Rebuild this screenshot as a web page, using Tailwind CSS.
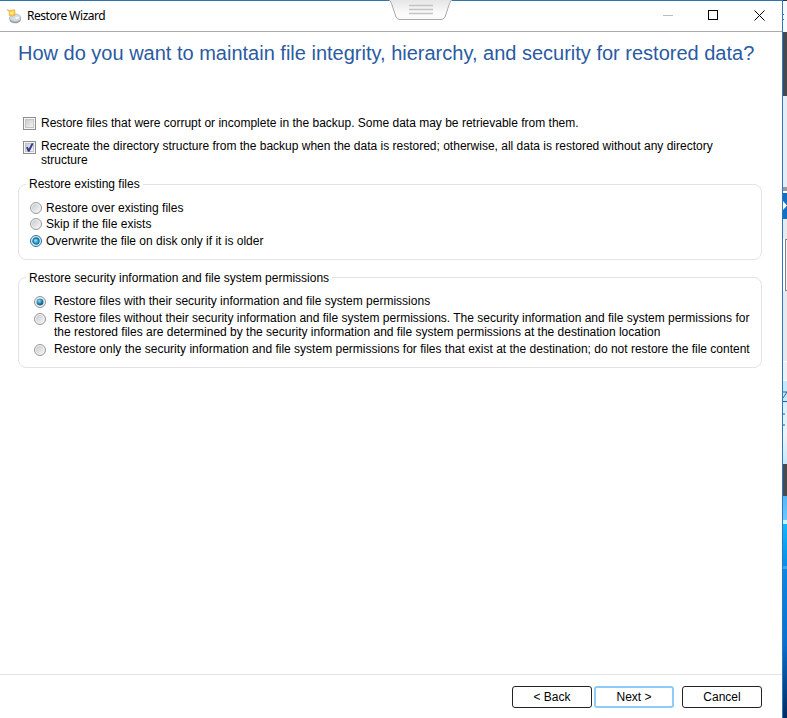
<!DOCTYPE html>
<html lang="en">
<head>
<meta charset="utf-8">
<title>Restore Wizard</title>
<script src="https://cdn.jsdelivr.net/npm/@tailwindcss/browser@4"></script>
</head>
<body class="w-[787px] h-[718px] overflow-hidden flex bg-white font-['Liberation_Sans',Arial,sans-serif] text-[12px] leading-[14px] text-black">
<svg class="absolute w-0 h-0">
  <defs>
    <linearGradient id="dot" x1="0" y1="0" x2="1" y2="1"><stop offset="0" stop-color="#c6cacd"/><stop offset="1" stop-color="#f6f6f6"/></linearGradient>
    <radialGradient id="blue" cx=".4" cy=".35" r=".7"><stop offset="0" stop-color="#8ce0f5"/><stop offset=".5" stop-color="#2c8fb8"/><stop offset="1" stop-color="#123f5e"/></radialGradient>
    <symbol id="off" viewBox="0 0 12 12"><circle cx="6" cy="6" r="5.5" fill="#f1f1f1" stroke="#969797"/><circle cx="6" cy="6" r="4" fill="url(#dot)"/></symbol>
    <symbol id="on" viewBox="0 0 12 12"><circle cx="6" cy="6" r="5.5" fill="#eef2f5" stroke="#8e9396"/><circle cx="6" cy="6" r="4" fill="#c5d4dd"/><circle cx="6" cy="6" r="3.3" fill="url(#blue)"/></symbol>
    <symbol id="onfocus" viewBox="0 0 12 12"><circle cx="6" cy="6" r="5.5" fill="#d3effb" stroke="#2f6f9b"/><circle cx="6" cy="6" r="3.1" fill="#36a9da" stroke="#1a6795" stroke-width="1.2"/><circle cx="5.6" cy="5.6" r="1.4" fill="#7fdcf6"/></symbol>
  </defs>
</svg>
<main class="relative w-[783px] h-[718px] shrink-0 flex flex-col border-t border-r border-t-[#2f73b0] border-r-[#2a78bd]">
  <header class="h-[31px] shrink-0 flex items-center border-b border-[#a9abad] pl-[7px]">
    <svg class="w-[15px] h-[15px] shrink-0" viewBox="0 0 15 15">
      <path d="M2.500 8v2.500C2.500 13 5 14.300 8.300 14.300S14 12.500 14 10V8z" fill="#98a2aa"/>
      <ellipse cx="8.300" cy="8.800" rx="5.600" ry="3.900" fill="#d4dce1" stroke="#a3adb4" stroke-width=".6"/>
      <ellipse cx="10" cy="8.800" rx="1.800" ry="1.100" fill="#f6f8fa"/>
      <path d="M0 .5l2.500 1L7.800.7 8 6.300l-2.700.9-3.300-.9L2.300 3z" fill="#f8c93c" stroke="#dda331" stroke-width=".5"/>
      <path d="M3.200 2.800l3.300-.4v2.800l-3 .2z" fill="#ffec8b"/>
    </svg>
    <h1 class="ml-[5px] font-['Noto_Sans',sans-serif] text-[12px] leading-[16px] tracking-[-0.48px] text-black">Restore Wizard</h1>
    <svg class="ml-auto mr-[17px] w-[102px] h-[11px] relative -top-px" viewBox="0 0 102 11" fill="none">
      <path d="M0 5.500h10" stroke="#bcbcbc"/>
      <rect x="45.500" y=".5" width="9" height="9" stroke="#000"/>
      <path d="M91.500.5l10 10M101.500.5l-10 10" stroke="#000"/>
    </svg>
  </header>
  <svg class="absolute left-[389px] top-[-1px] w-[64px] h-[21px]" viewBox="0 0 64 21">
    <defs><linearGradient id="tab" x1="0" y1="0" x2="0" y2="1"><stop stop-color="#e6e6e6"/><stop offset=".7" stop-color="#fbfbfb"/></linearGradient></defs>
    <path d="M0 0c2 1 2 3 3 5l4 12q1 2.500 4 2.500h41q3 0 4-2.500l4-12c1-2 1-4 3-5z" fill="url(#tab)"/>
    <path d="M0 0c2 1 2 3 3 5l4 12q1 2.500 4 2.500h41q3 0 4-2.500l4-12c1-2 1-4 3-5" fill="none" stroke="#aaa"/>
    <path d="M20 5.500h24M20 9.500h24M20 13.500h24" stroke="#c3c3c3" stroke-width="1.400"/>
  </svg>
  <h2 class="mt-[8px] ml-[18px] h-[26px] shrink-0 text-[20px] leading-[26px] whitespace-nowrap text-[#2a5ba3]">How do you want to maintain file integrity, hierarchy, and security for restored data?</h2>
  <section class="mt-[50px] ml-[23px] h-[60px] shrink-0 flex flex-col gap-[9px] whitespace-nowrap">
    <div class="flex gap-[5px] h-[14px]">
      <svg class="mt-[1px] w-[13px] h-[13px]" viewBox="0 0 13 13"><rect x=".5" y=".5" width="12" height="12" fill="#f5f5f5" stroke="#8e8f8f"/><rect x="2.500" y="2.500" width="8" height="8" fill="url(#dot)" stroke="#c3c5c6"/></svg>
      <p>Restore files that were corrupt or incomplete in the backup. Some data may be retrievable from them.</p>
    </div>
    <div class="flex gap-[5px]">
      <svg class="mt-[2px] w-[13px] h-[13px]" viewBox="0 0 13 13"><rect x=".5" y=".5" width="12" height="12" fill="#f5f5f5" stroke="#8e8f8f"/><rect x="2.500" y="2.500" width="8" height="8" fill="url(#dot)" stroke="#c3c5c6"/><path d="M3 6.500l1.700-.7 1.100 1.900L8.700 2.300l1.900.3L6.500 10.800H5z" fill="#30398f"/></svg>
      <p>Recreate the directory structure from the backup when the data is restored; otherwise, all data is restored without any directory<br>structure</p>
    </div>
  </section>
  <section class="relative mt-[8px] ml-[18px] w-[744px] h-[76px] shrink-0 border border-[#e3e3e3] rounded-[8px] pt-[16px] pl-[11px] whitespace-nowrap">
    <h3 class="absolute left-[7px] top-[-8px] bg-white px-[3px]">Restore existing files</h3>
    <div class="flex flex-col">
      <div class="flex items-center gap-[4px]"><svg class="w-[12px] h-[12px]"><use href="#off"/></svg><span>Restore over existing files</span></div>
      <div class="mt-[2px] flex items-center gap-[4px]"><svg class="w-[12px] h-[12px]"><use href="#off"/></svg><span>Skip if the file exists</span></div>
      <div class="mt-[3px] flex items-center gap-[4px]"><svg class="w-[12px] h-[12px]"><use href="#onfocus"/></svg><span>Overwrite the file on disk only if it is older</span></div>
    </div>
  </section>
  <section class="relative mt-[17px] ml-[18px] w-[744px] h-[91px] shrink-0 border border-[#e3e3e3] rounded-[8px] pt-[16px] pl-[15px] whitespace-nowrap">
    <h3 class="absolute left-[7px] top-[-7px] bg-white px-[3px]">Restore security information and file system permissions</h3>
    <div class="flex flex-col gap-[3px]">
      <div class="flex gap-[8px]"><svg class="mt-[2px] w-[12px] h-[12px]"><use href="#on"/></svg><span>Restore files with their security information and file system permissions</span></div>
      <div class="flex gap-[8px]"><svg class="mt-[2px] w-[12px] h-[12px]"><use href="#off"/></svg><span>Restore files without their security information and file system permissions. The security information and file system permissions for<br>the restored files are determined by the security information and file system permissions at the destination location</span></div>
      <div class="flex gap-[8px]"><svg class="mt-[2px] w-[12px] h-[12px]"><use href="#off"/></svg><span>Restore only the security information and file system permissions for files that exist at the destination; do not restore the file content</span></div>
    </div>
  </section>
  <footer class="mt-auto h-[44px] shrink-0 border-t border-[#e3e3e3] flex justify-end pt-[11px] pr-[20px] text-black">
    <button class="w-[80px] h-[22px] border border-[#222] rounded-[3px] bg-white">&lt; Back</button>
    <button class="ml-[2px] w-[80px] h-[22px] border-2 border-[#8ecbf8] rounded-[3px] bg-white">Next &gt;</button>
    <button class="ml-[8px] w-[80px] h-[22px] border border-[#222] rounded-[3px] bg-white">Cancel</button>
  </footer>
</main>
<aside class="w-[4px] h-[718px] flex flex-col overflow-hidden">
  <div class="h-[1px] shrink-0 bg-[#333]"></div>
  <div class="h-[31px] shrink-0 bg-[#f7fbff] flex flex-col justify-center gap-[4px]"><i class="w-px h-px bg-[#2a78bd]"></i><i class="w-px h-px bg-[#2a78bd]"></i></div>
  <div class="h-[64px] shrink-0 bg-[#46484d]"></div>
  <div class="h-[91px] shrink-0 bg-[#e6edf4]"></div>
  <div class="h-[4px] shrink-0 bg-[#969a9e]"></div>
  <div class="h-[2px] shrink-0 bg-white"></div>
  <svg class="h-[26px] w-[4px] shrink-0 bg-[#1271c4]" viewBox="0 0 4 26"><path d="M0 8l4 4.500L0 17z" fill="#fff"/></svg>
  <div class="h-[20px] shrink-0 bg-[#e9eaec]"></div>
  <div class="h-[52px] shrink-0 ml-[2px] border-l border-y border-[#827c82] bg-[#f4f4f6] rounded-l-[1px]"></div>
  <div class="h-[70px] shrink-0 bg-[#e7e9ed]"></div>
  <div class="h-[20px] shrink-0 bg-[#eef0f3] border-y border-white"></div>
  <svg class="h-[22px] w-[4px] shrink-0 bg-[#c5e8fb]" viewBox="0 0 4 22"><path d="M0 11h4L0 17M0 20.500h4" fill="none" stroke="#356494"/></svg>
  <div class="h-[32px] shrink-0 bg-linear-to-b from-[#d7f0fc] to-[#eef4fa] flex flex-col justify-center gap-[9px]"><i class="w-[2px] h-[2px] bg-[#77a6d2]"></i><i class="w-[2px] h-[2px] bg-[#77a6d2]"></i></div>
  <div class="h-[29px] shrink-0 bg-linear-to-b from-[#f1f3f6] to-[#c5e9fb]"></div>
  <div class="h-[32px] shrink-0 bg-[#4a4a4c]"></div>
  <div class="h-[24px] shrink-0 bg-linear-to-b from-[#54b6f5] to-[#6bcbff]"></div>
  <div class="h-[4px] shrink-0 bg-[#c5f5fe]"></div>
  <div class="h-[42px] shrink-0 bg-linear-to-b from-[#13b7fc] to-[#078ee7]"></div>
  <div class="h-[3px] shrink-0 bg-[#38a9ed]"></div>
  <div class="flex-1 bg-linear-to-b from-[#0c88e3] via-[#0a70cf] to-[#052a60]"></div>
</aside>
</body>
</html>
